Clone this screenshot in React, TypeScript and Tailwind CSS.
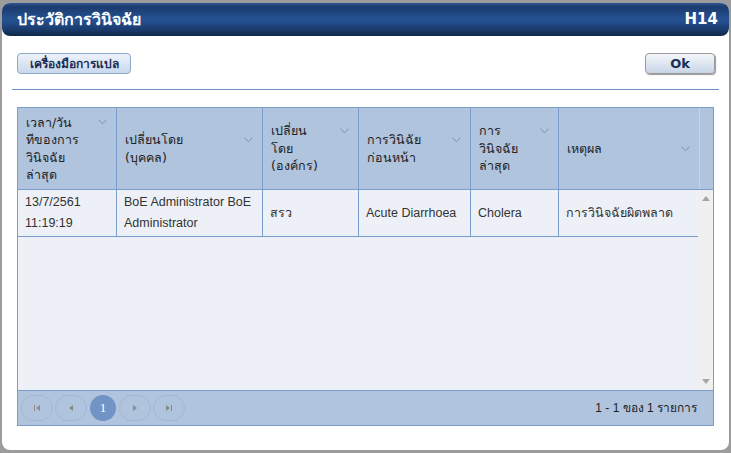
import React from "react";

const Chevron = () => (
  <svg width="9" height="6" viewBox="0 0 9 6" className="shrink-0">
    <path d="M0.5 0.8 L4.5 4.6 L8.5 0.8" fill="none" stroke="#7f8fa6" strokeWidth="1" />
  </svg>
);

const HeadCell = ({ lines, w, last }: { lines: string[]; w: string; last?: boolean }) => (
  <div className={`${w} shrink-0 flex items-center pl-[8px] pr-[9px] ${last ? "border-r border-[#c9d5e5]" : "border-r border-[#7b9dcc]"}`}>
    <div className="flex-1 text-[12.5px] leading-[17.5px] text-[#222]">
      {lines.map((l, i) => (
        <div key={i}>{l}</div>
      ))}
    </div>
    <div className="self-center" style={{ marginTop: lines.length > 1 ? `-${(lines.length - 1) * 17.5}px` : "0px" }}>
      <Chevron />
    </div>
  </div>
);

const DataCell = ({ children, w, last }: { children: React.ReactNode; w: string; last?: boolean }) => (
  <div
    className={`${w} shrink-0 flex items-center pl-[7px] pr-[2px] text-[12.5px] leading-[21px] text-[#333] ${last ? "" : "border-r border-[#7b9dcc]"}`}
    style={{ fontFamily: '"Liberation Sans", "DejaVu Sans", sans-serif' }}
  >
    <div>{children}</div>
  </div>
);

const PagerBtn = ({ children }: { children: React.ReactNode }) => (
  <div className="w-[32px] h-[26px] rounded-full border border-[#a3b8d6] flex items-center justify-center">
    {children}
  </div>
);

export default function App() {
  const font = { fontFamily: '"DejaVu Sans", "Noto Sans", "Liberation Sans", sans-serif' };
  return (
    <div className="w-[731px] h-[453px] bg-[#9c9c9c] pt-[3px] pl-[2px] pr-[2px] overflow-hidden" style={font}>
      <div className="h-[447px] bg-white rounded-[8px] flex flex-col">
        {/* Title bar */}
        <div className="h-[33px] rounded-[8px] flex items-center justify-between pl-[15px] pr-[11px] bg-[linear-gradient(to_bottom,#2f5690_0%,#1c3b6d_12%,#23508f_45%,#24508f_55%,#183766_85%,#0f2749_100%)]">
          <span className="text-white font-bold text-[16px]">ประวัติการวินิจฉัย</span>
          <span className="text-white font-bold text-[15px]">H14</span>
        </div>

        <div className="px-[10px]">
          {/* toolbar */}
          <div className="flex justify-between pl-[5px] pr-[4px] pt-[17px]">
            <button className="h-[21px] w-[114px] rounded-[4px] border border-[#8fa7c9] bg-[linear-gradient(to_bottom,#eef3fb,#c9d8ec)] text-[12px] font-bold text-[#1a2d55] flex items-center justify-center">
              เครื่องมือการแปล
            </button>
            <button className="h-[21px] w-[70px] rounded-[4px] border border-[#9a9a9a] shadow-[1px_1px_1px_#999] bg-[linear-gradient(to_bottom,#f4f7fb,#c8d4e6)] text-[13px] font-bold text-[#1a2d55] flex items-center justify-center">
              Ok
            </button>
          </div>
          <div className="mt-[15px] h-[1px] bg-[#6f93c8]" />

          {/* grid */}
          <div className="mx-[5px] mt-[17px] h-[319px] border border-[#7b9dcc] flex flex-col">
            <div className="h-[82px] bg-[#b0c4de] border-b border-[#7b9dcc] flex">
              <HeadCell w="w-[99px]" lines={["เวลา/วัน", "ทีของการ", "วินิจฉัย", "ล่าสุด"]} />
              <HeadCell w="w-[146px]" lines={["เปลี่ยนโดย", "(บุคคล)"]} />
              <HeadCell w="w-[96px]" lines={["เปลี่ยน", "โดย", "(องค์กร)"]} />
              <HeadCell w="w-[112px]" lines={["การวินิฉัย", "ก่อนหน้า"]} />
              <HeadCell w="w-[88px]" lines={["การ", "วินิจฉัย", "ล่าสุด"]} />
              <HeadCell w="w-[141px]" lines={["เหตุผล"]} last />
              <div className="w-[16px]" />
            </div>

            <div className="flex-1 flex bg-[#edf1f7]">
              <div className="w-[680px]">
                <div className="h-[47px] flex border-b border-[#7b9dcc]">
                  <DataCell w="w-[99px]">
                    13/7/2561
                    <br />
                    11:19:19
                  </DataCell>
                  <DataCell w="w-[146px]">
                    BoE Administrator BoE
                    <br />
                    Administrator
                  </DataCell>
                  <DataCell w="w-[96px]">สรว</DataCell>
                  <DataCell w="w-[112px]">Acute Diarrhoea</DataCell>
                  <DataCell w="w-[88px]">Cholera</DataCell>
                  <DataCell w="w-[139px]" last>
                    การวินิจฉัยผิดพลาด
                  </DataCell>
                </div>
              </div>
              <div className="w-[18px] bg-[#f0f0f0] flex flex-col justify-between items-center py-[6px]">
                <svg width="8" height="5" viewBox="0 0 8 5"><path d="M0 5 L4 0 L8 5 Z" fill="#a6a6a6" /></svg>
                <svg width="8" height="5" viewBox="0 0 8 5"><path d="M0 0 L4 5 L8 0 Z" fill="#a6a6a6" /></svg>
              </div>
            </div>

            <div className="h-[35px] bg-[#b0c4de] border-t border-[#7b9dcc] flex items-center justify-between pl-[3px] pr-[16px]">
              <div className="flex gap-[2px]">
                <PagerBtn>
                  <svg width="8" height="8" viewBox="0 0 8 8"><rect x="1" y="1" width="1" height="6" fill="#8a8a8a" /><path d="M7 1 L3 4 L7 7 Z" fill="#8a8a8a" /></svg>
                </PagerBtn>
                <PagerBtn>
                  <svg width="8" height="8" viewBox="0 0 8 8"><path d="M6 1 L2 4 L6 7 Z" fill="#8a8a8a" /></svg>
                </PagerBtn>
                <div className="w-[26px] h-[26px] rounded-full bg-[#7193c5] text-white text-[13px] flex items-center justify-center mx-[1px]" style={{ fontFamily: '"Liberation Serif", serif' }}>1</div>
                <PagerBtn>
                  <svg width="8" height="8" viewBox="0 0 8 8"><path d="M2 1 L6 4 L2 7 Z" fill="#8a8a8a" /></svg>
                </PagerBtn>
                <PagerBtn>
                  <svg width="8" height="8" viewBox="0 0 8 8"><path d="M1 1 L5 4 L1 7 Z" fill="#8a8a8a" /><rect x="6" y="1" width="1" height="6" fill="#8a8a8a" /></svg>
                </PagerBtn>
              </div>
              <span className="text-[12px] text-[#222]" style={{ fontFamily: '"Liberation Sans", "DejaVu Sans", sans-serif' }}>1 - 1 ของ 1 รายการ</span>
            </div>
          </div>
        </div>
      </div>
    </div>
  );
}
